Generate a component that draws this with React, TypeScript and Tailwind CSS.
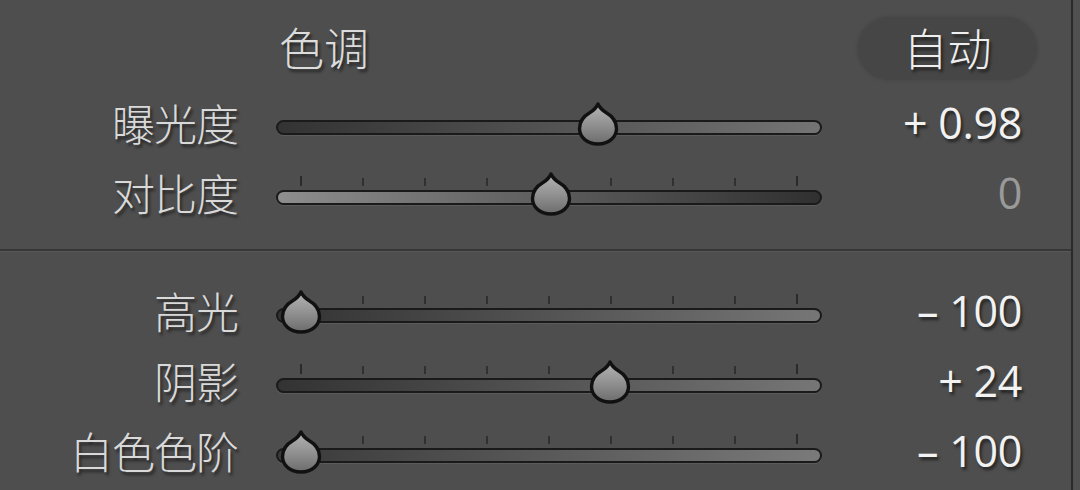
import React from "react";

type Row = {
  label: string;
  value: string;
  pos: number; // thumb center x (absolute px)
  ticks: boolean;
  grad: string;
  muted?: boolean;
};

const TRACK_LEFT = 276;
const TICKS = [0, 1, 2, 3, 4, 5, 6, 7, 8];

function Thumb({ left }: { left: number }) {
  return (
    <svg
      className="absolute top-[10px]"
      style={{ left }}
      width="42"
      height="44"
      viewBox="0 0 42 44"
    >
      <defs>
        <linearGradient id="tg" x1="0" y1="0" x2="0" y2="1">
          <stop offset="0" stopColor="#b4b4b4" />
          <stop offset="0.5" stopColor="#929292" />
          <stop offset="1" stopColor="#6c6c6c" />
        </linearGradient>
      </defs>
      <path
        d="M21 2 C22.5 5.5 25 8 29 10.5 C35 14 39.5 19.5 39.5 26.5 C39.5 35.5 31.5 42 21 42 C10.5 42 2.5 35.5 2.5 26.5 C2.5 19.5 7 14 13 10.5 C17 8 19.5 5.5 21 2 Z"
        fill="url(#tg)"
        stroke="#111111"
        strokeWidth="3.4"
        strokeLinejoin="round"
      />
    </svg>
  );
}

function Slider({ row }: { row: Row }) {
  return (
    <div className="relative h-[70px] w-[546px] ml-[38px] flex items-center">
      {row.ticks &&
        TICKS.map((k) => {
          const end = k === 0 || k === 8;
          return (
            <div
              key={k}
              className={
                end
                  ? "absolute w-[2px] h-[10px] top-[14px] bg-[#2a2a2a]"
                  : "absolute w-[2px] h-[8px] top-[16px] bg-[#303030]"
              }
              style={{ left: 24 + k * 62 }}
            />
          );
        })}
      <div
        className={`w-full h-[15px] rounded-full border-[2.5px] border-[#1a1a1a] shadow-[0_1px_0_rgba(255,255,255,0.08)] ${row.grad}`}
      />
      <Thumb left={row.pos - TRACK_LEFT - 21} />
    </div>
  );
}

function SliderRow({ row }: { row: Row }) {
  return (
    <div className="flex items-center h-[70px]">
      <div className="w-[238px] flex justify-end pb-[10px] text-[43px] font-light leading-none text-[#d9d9d9] [text-shadow:2px_3px_3px_rgba(0,0,0,0.55)] [font-family:'Noto_Sans_CJK_SC',sans-serif] tracking-[-1px]">
        {row.label}
      </div>
      <Slider row={row} />
      <div
        className={`w-[200px] flex justify-end pb-[10px] text-[43px] leading-none [font-family:'Open_Sans',sans-serif] tracking-[-0.3px] ${
          row.muted
            ? "text-[#9a9a9a]"
            : "text-[#f2f2f2] [text-shadow:2px_3px_3px_rgba(0,0,0,0.55)]"
        }`}
      >
        {row.value}
      </div>
    </div>
  );
}

const top: Row[] = [
  {
    label: "曝光度",
    value: "+ 0.98",
    pos: 598,
    ticks: false,
    grad: "bg-gradient-to-r from-[#333333] to-[#747474]",
  },
  {
    label: "对比度",
    value: "0",
    pos: 551,
    ticks: true,
    muted: true,
    grad: "bg-gradient-to-r from-[#8e8e8e] to-[#303030]",
  },
];

const bottom: Row[] = [
  {
    label: "高光",
    value: "– 100",
    pos: 301,
    ticks: true,
    grad: "bg-gradient-to-r from-[#333333] to-[#767676]",
  },
  {
    label: "阴影",
    value: "+ 24",
    pos: 610,
    ticks: true,
    grad: "bg-gradient-to-r from-[#333333] to-[#767676]",
  },
  {
    label: "白色色阶",
    value: "– 100",
    pos: 301,
    ticks: true,
    grad: "bg-gradient-to-r from-[#3a3a3a] to-[#7a7a7a]",
  },
];

export default function App() {
  return (
    <div className="w-[1080px] h-[490px] overflow-hidden flex bg-[#505050]">
      <div className="w-[1071px] h-full bg-[#4e4e4e] flex flex-col">
        <div className="h-[92px] flex items-start pt-[17px]">
          <div className="ml-[279px] h-[63px] flex items-center pb-[4px] text-[45px] font-light leading-none text-[#dcdcdc] [text-shadow:2px_3px_3px_rgba(0,0,0,0.55)] [font-family:'Noto_Sans_CJK_SC',sans-serif]">
            色调
          </div>
          <div className="ml-auto mr-[34px] w-[179px] h-[63px] rounded-full bg-[#464646] shadow-[0_0_4px_rgba(0,0,0,0.15)] flex items-center justify-center pb-[3px] text-[44px] font-light leading-none text-[#eeeeee] [text-shadow:2px_3px_3px_rgba(0,0,0,0.6)] [font-family:'Noto_Sans_CJK_SC',sans-serif]">
            自动
          </div>
        </div>
        {top.map((r) => (
          <SliderRow key={r.label} row={r} />
        ))}
        <div className="mt-[17px] h-[2px] bg-[#373737]" />
        <div className="h-[1px] bg-[#575757]" />
        <div className="h-[28px]" />
        {bottom.map((r) => (
          <SliderRow key={r.label} row={r} />
        ))}
      </div>
      <div className="w-[2px] h-full bg-[#2a2a2a]" />
    </div>
  );
}
